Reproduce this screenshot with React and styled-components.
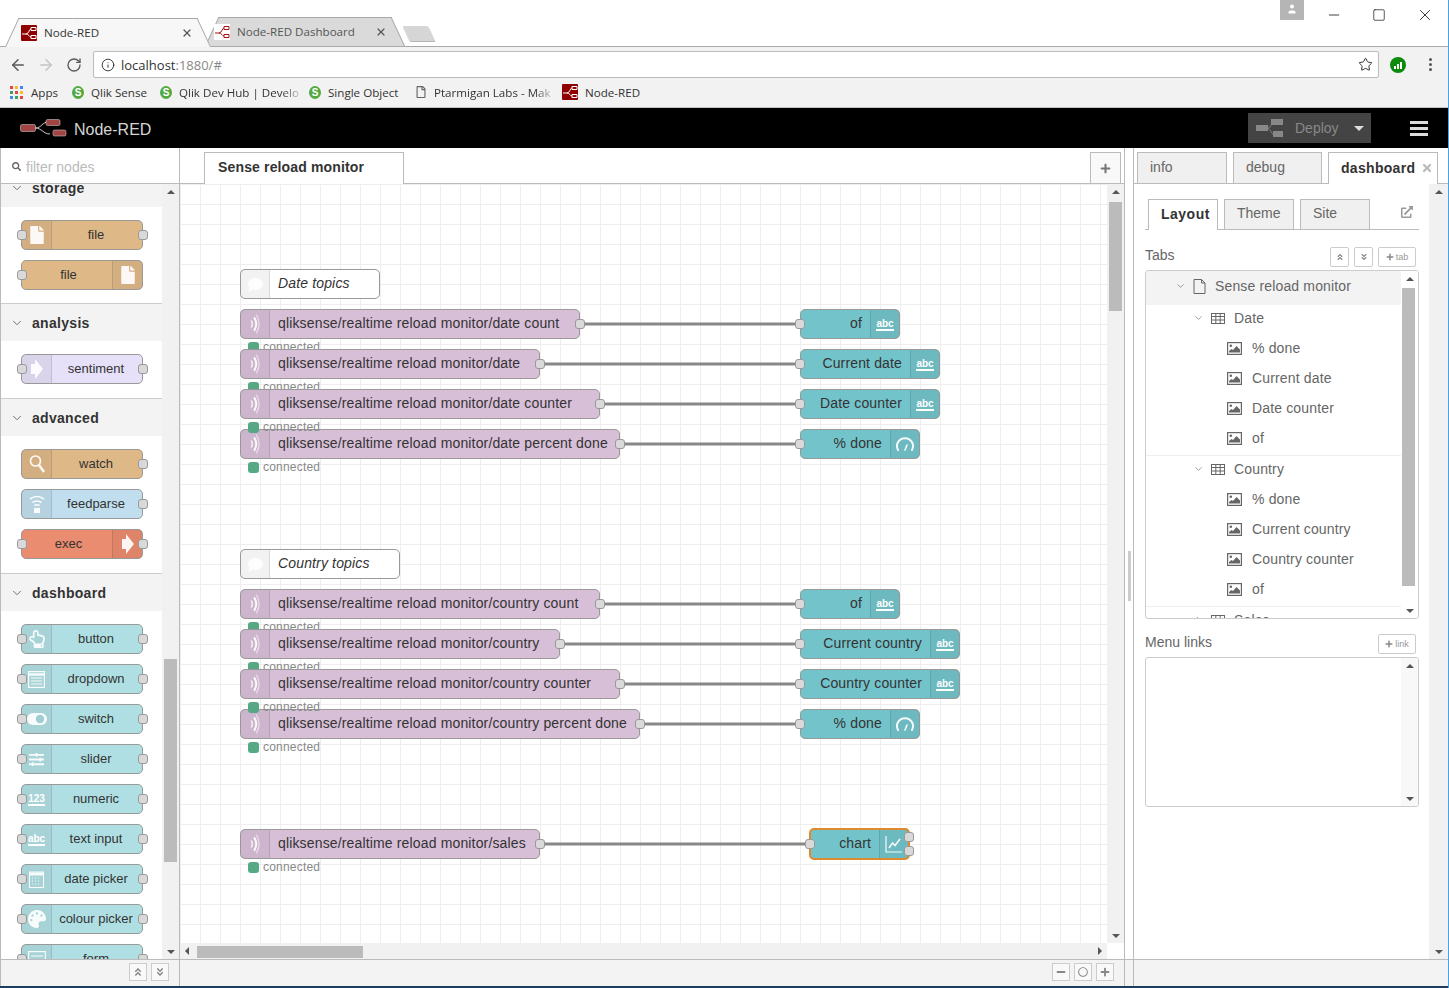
import React from "react";
import styled, { createGlobalStyle } from "styled-components";
import { ArrowLeft, ArrowRight, RotateCw, Info, Star, X, Minus, Square, User, ChevronDown, ChevronRight } from "lucide-react";
import {
	FaAngleDoubleUp,
	FaAngleDoubleDown,
	FaPlus,
	FaMinus,
	FaTimes,
	FaSearch,
	FaRegFile,
	FaFile,
	FaExternalLinkAlt,
	FaRegCircle,
	FaRegHandPointUp,
	FaSlidersH,
	FaPalette,
	FaComment,
} from "react-icons/fa";

const GlobalStyle = createGlobalStyle`
	html, body { margin: 0; padding: 0; background: #fff; }
	* { box-sizing: border-box; }
	body { font-family: "Liberation Sans", Arial, sans-serif; }
`;

const Page = styled.div`
	width: 1449px;
	height: 988px;
	overflow: hidden;
	display: flex;
	flex-direction: column;
	border-right: 1px solid #4aa3df;
`;

/* browser chrome */
const TabStrip = styled.div`
	height: 47px;
	flex: none;
	display: flex;
	align-items: flex-end;
	padding-left: 5px;
	background: #fff;
	border-bottom: 1px solid #a8a8a8;
	position: relative;
`;

const BrowserTab = styled.div`
	position: relative;
	width: ${p => p.$w}px;
	height: 29px;
	margin-bottom: ${p => (p.$active ? "-1px" : "0")};
	margin-right: -6px;
	display: flex;
	align-items: center;
	padding: 0 0 0 ${p => p.$pad}px;
	font-family: "Open Sans", sans-serif;
	font-size: 11.6px;
	color: ${p => (p.$active ? "#333" : "#555")};
	z-index: ${p => (p.$active ? 2 : 1)};
	&::before,
	&::after {
		content: "";
		position: absolute;
		top: 0;
		bottom: 0;
		width: 60%;
		background: ${p => (p.$active ? "#f7f7f7" : "#dadada")};
		border-top: 1px solid #a8a8a8;
		transform-origin: bottom;
	}
	&::before {
		left: 0;
		border-left: 1px solid #a8a8a8;
		transform: skewX(-25deg);
	}
	&::after {
		right: 0;
		border-right: 1px solid #a8a8a8;
		transform: skewX(25deg);
	}
`;

const TabLabel = styled.span`
	position: relative;
	z-index: 1;
	flex: 1;
	margin-left: 7px;
	white-space: nowrap;
`;

const TabClose = styled.span`
	position: relative;
	z-index: 1;
	display: flex;
	margin-right: 18px;
	color: #555;
`;

const TabIconSlot = styled.span`
	position: relative;
	z-index: 1;
	display: flex;
`;

const NewTab = styled.div`
	width: 26px;
	height: 16px;
	margin: 0 0 4px 7px;
	background: #d6d6d6;
	border-bottom: 1px solid #b5b5b5;
	border-radius: 2px;
	transform: skewX(25deg);
`;

const ProfileBadge = styled.div`
	position: absolute;
	top: 0;
	left: 1280px;
	width: 24px;
	height: 20px;
	background: #b5b5b5;
	color: #fff;
	display: flex;
	justify-content: center;
	padding-top: 3px;
`;

const WindowControls = styled.div`
	position: absolute;
	top: 6px;
	right: 14px;
	display: flex;
	align-items: center;
	gap: 30px;
	color: #111;
`;

const Toolbar = styled.div`
	height: 33px;
	flex: none;
	background: #f2f2f2;
	display: flex;
	align-items: center;
	padding: 2px 10px 0 8px;
	color: #5a5a5a;
`;

const NavIcon = styled.span`
	display: flex;
	width: 20px;
	justify-content: center;
	margin-right: 8px;
	color: ${p => (p.$off ? "#c4c4c4" : "#5a5a5a")};
`;

const Omnibox = styled.div`
	width: 1286px;
	height: 27px;
	margin-left: 1px;
	background: #fff;
	border: 1px solid #bbb;
	border-radius: 2px;
	display: flex;
	align-items: center;
	padding: 0 5px 0 7px;
	font-family: "Open Sans", sans-serif;
	font-size: 13px;
	color: #333;
`;

const OmniText = styled.span`
	flex: 1;
	margin-left: 6px;
`;

const OmniDim = styled.span`
	color: #888;
`;

const Extension = styled.span`
	width: 16px;
	height: 16px;
	margin-left: 11px;
	border-radius: 50%;
	background: #0c8a0c;
	display: flex;
	align-items: flex-end;
	justify-content: center;
	gap: 1px;
	padding-bottom: 4px;
`;

const ExtBar = styled.i`
	display: block;
	width: 2px;
	height: ${p => p.$h}px;
	background: #fff;
`;

const MenuDots = styled.span`
	margin-left: 23px;
	display: flex;
	flex-direction: column;
	gap: 2px;
`;

const MenuDot = styled.i`
	display: block;
	width: 3px;
	height: 3px;
	border-radius: 50%;
	background: #555;
`;

const Bookmarks = styled.div`
	height: 28px;
	flex: none;
	background: #f2f2f2;
	border-bottom: 1px solid #c4c4c4;
	display: flex;
	align-items: center;
	padding: 0 0 3px 10px;
	font-family: "Open Sans", sans-serif;
	font-size: 11.6px;
	color: #333;
`;

const Bookmark = styled.div`
	width: ${p => p.$w}px;
	flex: none;
	display: flex;
	align-items: center;
	gap: 7px;
	white-space: nowrap;
`;

const BookmarkText = styled.span`
	display: block;
	mask-image: linear-gradient(to right, #000 86%, rgba(0, 0, 0, 0.25));
`;

const AppsGrid = styled.span`
	display: grid;
	grid-template-columns: repeat(3, 3px);
	gap: 2px;
	flex: none;
	margin-right: 1px;
`;

const AppsDot = styled.i`
	display: block;
	width: 3px;
	height: 3px;
	background: ${p => p.$c};
`;

const QlikBadge = styled.span`
	width: 12px;
	height: 13px;
	flex: none;
	border-radius: 50%;
	background: #54a944;
	color: #fff;
	font-size: 10px;
	font-weight: bold;
	font-family: "Liberation Sans", sans-serif;
	text-align: center;
	line-height: 13px;
`;

/* node-red header */
const Header = styled.header`
	height: 40px;
	flex: none;
	background: #000;
	display: flex;
	align-items: center;
	padding: 0 20px 0 20px;
`;

const Brand = styled.span`
	flex: 1;
	margin-left: 7px;
	padding-top: 3px;
	color: #d4d4d4;
	font-size: 16px;
`;

const DeployButton = styled.div`
	width: 123px;
	height: 30px;
	background: #444;
	color: #888;
	display: flex;
	align-items: center;
	padding-left: 8px;
	font-size: 14px;
	margin-right: 39px;
`;

const DeployLabel = styled.span`
	flex: 1;
	margin-left: 12px;
`;

const Caret = styled.i`
	display: block;
	width: 0;
	height: 0;
	margin-right: 7px;
	border-left: 5px solid transparent;
	border-right: 5px solid transparent;
	border-top: 5px solid #ddd;
`;

const Burger = styled.div`
	width: 18px;
	display: flex;
	flex-direction: column;
	gap: 3px;
`;

const BurgerBar = styled.i`
	display: block;
	height: 3px;
	background: #ddd;
`;

/* main area */
const Main = styled.div`
	flex: 1;
	min-height: 0;
	display: flex;
`;

const BottomLine = styled.div`
	height: 2px;
	flex: none;
	background: #1e3c60;
`;

const Footer = styled.div`
	height: 27px;
	flex: none;
	background: #f3f3f3;
	border-top: 1px solid #bbb;
	display: flex;
	align-items: center;
	justify-content: flex-end;
	gap: 4px;
	padding: 0 ${p => p.$right || 0}px 2px 0;
`;

const FootButton = styled.span`
	width: 18px;
	height: 18px;
	background: #f9f9f9;
	border: 1px solid #ccc;
	color: #888;
	display: flex;
	align-items: center;
	justify-content: center;
	font-size: 10px;
`;

const Sidebar = styled.aside`
	width: 180px;
	flex: none;
	display: flex;
	flex-direction: column;
	border-left: 1px solid #bbb;
	border-right: 1px solid #bbb;
`;

const Filter = styled.div`
	height: 36px;
	flex: none;
	border-bottom: 1px solid #bbb;
	display: flex;
	align-items: center;
	gap: 5px;
	padding: 2px 0 0 11px;
	color: #bbb;
	font-size: 14px;
`;

const SearchGlyph = styled.span`
	display: flex;
	color: #666;
	font-size: 9px;
`;

const PaletteBody = styled.div`
	flex: 1;
	min-height: 0;
	display: flex;
	overflow: hidden;
`;

const PaletteList = styled.div`
	width: 161px;
	flex: none;
	margin-top: -15px;
`;

const SectionHead = styled.div`
	height: 38px;
	background: #f3f3f3;
	display: flex;
	align-items: center;
	gap: 8px;
	padding-left: 9px;
	font-size: 14px;
	font-weight: bold;
	letter-spacing: 0.3px;
	color: #333;
	border-top: ${p => (p.$first ? "none" : "1px solid #ccc")};
	svg {
		color: #666;
	}
`;

const SectionBody = styled.div`
	padding: 13px 0 ${p => (p.$first ? 3 : 4)}px 20px;
`;

const PaletteNode = styled.div`
	position: relative;
	width: 122px;
	height: 30px;
	margin-bottom: 10px;
	background: ${p => p.$color};
	border: 1px solid #999;
	border-radius: 5px;
	display: flex;
	flex-direction: ${p => (p.$right ? "row-reverse" : "row")};
	font-size: 13px;
	color: #333;
`;

const NodeStrip = styled.div`
	width: ${p => p.$w || 30}px;
	flex: none;
	background: rgba(0, 0, 0, 0.05);
	border-${p => (p.$right ? "left" : "right")}: 1px solid rgba(0, 0, 0, 0.1);
	display: flex;
	align-items: center;
	justify-content: center;
	color: #fff;
	font-size: 18px;
	svg {
		opacity: 0.92;
	}
`;

const PaletteLabel = styled.div`
	flex: 1;
	text-align: center;
	line-height: 28px;
	padding: ${p => (p.$right ? "0 0 0 3px" : "0 2px 0 0")};
	white-space: nowrap;
`;

const Port = styled.span`
	position: absolute;
	top: ${p => (p.$top !== undefined ? `${p.$top}px` : "50%")};
	${p => (p.$side === "left" ? `left: ${p.$flow ? -6 : -5}px;` : "right: -6px;")}
	width: 10px;
	height: 10px;
	margin-top: ${p => (p.$top !== undefined ? "0" : "-5px")};
	background: #d9d9d9;
	border: 1px solid #999;
	border-radius: 3px;
`;

const Track = styled.div`
	position: relative;
	flex: none;
	width: ${p => p.$w || 17}px;
	background: ${p => p.$bg || "#f1f1f1"};
`;

const Thumb = styled.div`
	position: absolute;
	left: ${p => p.$left || 2}px;
	right: ${p => p.$rightGap || 2}px;
	top: ${p => p.$top}px;
	height: ${p => p.$h}px;
	background: #bbb;
`;

const Arrow = styled.i`
	position: absolute;
	left: 50%;
	margin-left: -4px;
	width: 0;
	height: 0;
	border-left: 4px solid transparent;
	border-right: 4px solid transparent;
	${p => (p.$up ? `top: ${p.$off}px; border-bottom: 4px solid #555;` : `bottom: ${p.$off}px; border-top: 4px solid #555;`)}
`;

const SideArrow = styled.i`
	position: absolute;
	top: 50%;
	margin-top: -4px;
	width: 0;
	height: 0;
	border-top: 4px solid transparent;
	border-bottom: 4px solid transparent;
	${p => (p.$left ? `left: 5px; border-right: 4px solid #555;` : `right: 5px; border-left: 4px solid #555;`)}
`;

/* workspace */
const Workspace = styled.section`
	width: 945px;
	flex: none;
	display: flex;
	flex-direction: column;
	border-right: 1px solid #bbb;
`;

const WorkTabs = styled.div`
	height: 36px;
	flex: none;
	border-bottom: 1px solid #bbb;
	display: flex;
	align-items: flex-end;
	justify-content: space-between;
	padding: 0 3px 0 24px;
`;

const WorkTab = styled.div`
	width: 200px;
	height: 32px;
	margin-bottom: -1px;
	background: #fff;
	border: 1px solid #bbb;
	border-bottom: none;
	padding: 0 0 3px 13px;
	display: flex;
	align-items: center;
	font-size: 14px;
	font-weight: bold;
	letter-spacing: 0.15px;
	color: #333;
`;

const AddTab = styled.div`
	width: 31px;
	height: 31px;
	border: 1px solid #bbb;
	border-bottom: none;
	color: #777;
	background: #f9f9f9;
	display: flex;
	align-items: center;
	justify-content: center;
	font-size: 11px;
`;

const CanvasRow = styled.div`
	flex: 1;
	min-height: 0;
	display: flex;
`;

const Canvas = styled.div`
	position: relative;
	flex: 1;
	overflow: hidden;
	background-color: #fff;
	background-image: linear-gradient(#eee 1px, transparent 1px), linear-gradient(90deg, #eee 1px, transparent 1px);
	background-size: 20px 20px;
`;

const Wires = styled.svg`
	position: absolute;
	left: 0;
	top: 0;
`;

const FlowNode = styled.div`
	position: absolute;
	left: ${p => p.$x - (p.$selected ? 1 : 0)}px;
	top: ${p => p.$y - (p.$selected ? 1 : 0)}px;
	width: ${p => p.$w + (p.$selected ? 1 : 0)}px;
	height: ${p => (p.$selected ? 32 : 30)}px;
	background: ${p => p.$color};
	border: ${p => (p.$selected ? "2px solid #e08a2f" : "1px solid #999")};
	border-radius: 5px;
	display: flex;
	flex-direction: ${p => (p.$right ? "row-reverse" : "row")};
	font-size: 14px;
	font-style: ${p => (p.$italic ? "italic" : "normal")};
	color: #333;
	letter-spacing: 0.15px;
`;

const FlowLabel = styled.div`
	flex: 1;
	line-height: 27px;
	padding: 0 8px;
	white-space: nowrap;
	text-align: ${p => (p.$right ? "right" : "left")};
`;

const MiniText = styled.span`
	font-size: 10px;
	font-weight: bold;
	font-style: normal;
	letter-spacing: 0;
	color: #fff;
	line-height: 11px;
	border-bottom: 2px solid #fff;
`;

const Status = styled.div`
	position: absolute;
	left: ${p => p.$x}px;
	top: ${p => p.$y}px;
	display: flex;
	align-items: center;
	gap: 4px;
	font-size: 12px;
	letter-spacing: 0.2px;
	color: #888;
	white-space: nowrap;
`;

const StatusDot = styled.i`
	display: block;
	width: 11px;
	height: 11px;
	border-radius: 3px;
	background: #55a985;
`;

const HScroll = styled.div`
	height: 16px;
	flex: none;
	display: flex;
`;

const HTrack = styled.div`
	position: relative;
	flex: 1;
	background: #f1f1f1;
`;

const HThumb = styled.div`
	position: absolute;
	left: 17px;
	top: 3px;
	width: 166px;
	height: 12px;
	background: #bbb;
`;

const HCorner = styled.div`
	width: 17px;
	background: #fff;
`;

const Splitter = styled.div`
	width: 8px;
	flex: none;
	display: flex;
	flex-direction: column;
`;

const SplitBody = styled.div`
	flex: 1;
	display: flex;
	align-items: center;
	padding-left: 3px;
`;

const SplitHandle = styled.i`
	display: block;
	width: 3px;
	height: 50px;
	margin-top: 44px;
	background: #ccc;
`;

/* info panel */
const Panel = styled.aside`
	flex: 1;
	min-width: 0;
	display: flex;
	flex-direction: column;
	border-left: 1px solid #bbb;
`;

const PanelTabs = styled.div`
	height: 36px;
	flex: none;
	border-bottom: 1px solid #bbb;
	display: flex;
	align-items: flex-end;
	gap: 6px;
	padding-left: 3px;
`;

const PanelTab = styled.div`
	width: ${p => p.$w}px;
	height: 32px;
	margin-bottom: -1px;
	border: 1px solid #bbb;
	${p => (p.$active ? "border-bottom: none;" : "")}
	background: ${p => (p.$active ? "#fff" : "#f0f0f0")};
	color: ${p => (p.$active ? "#333" : "#666")};
	font-weight: ${p => (p.$active ? "bold" : "normal")};
	letter-spacing: ${p => (p.$active ? "0.3px" : "0")};
	font-size: 14px;
	display: flex;
	align-items: center;
	justify-content: space-between;
	padding: 0 4px 2px 12px;
`;

const PanelClose = styled.span`
	display: flex;
	color: #bbb;
	font-size: 12px;
`;

const PanelBody = styled.div`
	flex: 1;
	min-height: 0;
	display: flex;
`;

const PanelContent = styled.div`
	flex: 1;
	min-width: 0;
	padding: 14px 10px 0 11px;
	color: #666;
	font-size: 14px;
`;

const SubTabs = styled.div`
	height: 32px;
	border-bottom: 1px solid #bbb;
	display: flex;
	align-items: flex-end;
	gap: 6px;
	padding-left: 3px;
`;

const SubTab = styled.div`
	width: 70px;
	height: 31px;
	margin-bottom: -1px;
	border: 1px solid #bbb;
	${p => (p.$active ? "border-bottom: none;" : "")}
	background: ${p => (p.$active ? "#fff" : "#f0f0f0")};
	color: ${p => (p.$active ? "#333" : "#666")};
	font-weight: ${p => (p.$active ? "bold" : "normal")};
	letter-spacing: ${p => (p.$active ? "0.5px" : "0")};
	display: flex;
	align-items: center;
	padding: 0 0 3px 12px;
`;

const PopOut = styled.span`
	margin-left: auto;
	align-self: center;
	margin-right: 6px;
	display: flex;
	color: #999;
	font-size: 12px;
	padding-bottom: 4px;
`;

const FieldHead = styled.div`
	height: ${p => p.$h}px;
	display: flex;
	align-items: flex-end;
	gap: 5px;
	padding: 0 3px 3px 0;
`;

const FieldTitle = styled.span`
	flex: 1;
	align-self: center;
	padding-top: ${p => p.$pt || 0}px;
`;

const MiniButton = styled.span`
	height: 20px;
	width: ${p => p.$w || 19}px;
	background: #fff;
	border: 1px solid #ccc;
	border-radius: 2px;
	color: #999;
	font-size: 9px;
	display: flex;
	align-items: center;
	justify-content: center;
	gap: 2px;
	svg:first-child {
		font-size: 8px;
		color: #888;
	}
`;

const BoxShell = styled.div`
	display: flex;
	width: 274px;
	height: ${p => p.$h}px;
	border: 1px solid #ccc;
	border-radius: 3px;
	overflow: hidden;
	background: #fff;
`;

const Tree = styled.div`
	flex: 1;
	min-width: 0;
	letter-spacing: 0.15px;
`;

const TreeRoot = styled.div`
	height: 34px;
	margin-right: -17px;
	background: #f3f3f3;
	display: flex;
	align-items: center;
	padding: 0 0 4px 29px;
`;

const TreeGroup = styled.div`
	border-bottom: 1px solid #eee;
	padding-bottom: 2px;
`;

const TreeHead = styled.div`
	height: 28px;
	display: flex;
	align-items: center;
	padding: 0 0 2px 47px;
`;

const TreeItem = styled.div`
	height: 30px;
	display: flex;
	align-items: center;
	padding-left: 81px;
	gap: 10px;
`;

const Chevron = styled.span`
	display: flex;
	width: 11px;
	justify-content: center;
	color: #777;
`;

const TreeGlyph = styled.span`
	display: flex;
	margin: 0 ${p => p.$gap}px 0 ${p => p.$lead}px;
	color: #666;
`;

const Wave = () => (
	<svg width="16" height="22" viewBox="0 0 16 22" fill="none" stroke="#fff" strokeLinecap="round">
		<path d="M4.5 8q1.8 3 0 6" strokeWidth="1.6" opacity=".8" />
		<path d="M7.5 5q3.5 6 0 12" strokeWidth="2" />
		<path d="M9.5 2q5.2 9 0 18" strokeWidth="1.2" opacity=".65" />
	</svg>
);

const ArrowGlyph = () => (
	<svg width="13" height="20" viewBox="0 0 13 20" fill="#fff">
		<path d="M1 5h4V0l8 10-8 10v-5H1z" />
	</svg>
);

const FeedGlyph = () => (
	<svg width="16" height="20" viewBox="0 0 16 20" fill="none" stroke="#fff" strokeWidth="1.6">
		<path d="M1 5q7-5 14 0" />
		<path d="M3.5 8.5q4.5-3 9 0" />
		<path d="M5.5 11.5q2.5-1.5 5 0" />
		<rect x="5" y="14" width="6" height="5" fill="#fff" stroke="none" />
	</svg>
);

const SearchIcon = () => (
	<svg width="16" height="20" viewBox="0 0 16 20" fill="none" stroke="#fff" strokeWidth="1.7">
		<circle cx="6.5" cy="7" r="5" />
		<path d="M10 11l5 7" strokeWidth="2.4" />
	</svg>
);

const DropdownGlyph = () => (
	<svg width="17" height="17" viewBox="0 0 17 17" fill="none" stroke="#fff" strokeWidth="1.2">
		<rect x=".6" y=".6" width="15.8" height="15.8" />
		<path d="M.6 3.5h15.8" strokeWidth="2.4" />
		<path d="M3 7h11M3 10h11M3 13h11" />
	</svg>
);

const SwitchGlyph = () => (
	<svg width="20" height="12" viewBox="0 0 20 12">
		<rect width="20" height="12" rx="6" fill="#fff" />
		<circle cx="13" cy="6" r="4.2" fill="#9fcdd1" />
	</svg>
);

const CalendarGlyph = () => (
	<svg width="15" height="18" viewBox="0 0 15 18" fill="none" stroke="#fff">
		<rect x=".5" y="2" width="14" height="15.500" strokeWidth="1" />
		<path d="M.5 4h14" strokeWidth="3" />
		<path d="M3 8h9M3 11h9M3 14h9" strokeWidth="1" strokeDasharray="1 2" />
	</svg>
);

const FormGlyph = () => (
	<svg width="18" height="17" viewBox="0 0 18 17" fill="none" stroke="#fff" strokeWidth="1.2">
		<rect x=".6" y=".6" width="16.8" height="15.8" />
		<path d="M3 5h12M3 9h12M3 13h12" />
	</svg>
);

const Gauge = () => (
	<svg width="20" height="18" viewBox="0 0 20 18" fill="none" stroke="#fff" strokeLinecap="round">
		<path d="M3 15A8 8 0 1 1 17 15" strokeWidth="2" />
		<path d="M10 15l2-5" strokeWidth="1.6" />
	</svg>
);

const ChartGlyph = () => (
	<svg width="18" height="18" viewBox="0 0 18 18" fill="none" stroke="#fff" strokeWidth="1.2">
		<path d="M1 1v16h16" />
		<path d="M4 13l3.5-5 2.5 2.5L15 4" strokeWidth="1.6" />
	</svg>
);

const Logo = () => (
	<svg width="47" height="18" viewBox="0 0 47 18">
		<path d="M15 9c7 0 7-6 13-6M15 9c7 0 8 6 15 6" fill="none" stroke="#ccc" strokeWidth="1" />
		<rect x=".5" y="5.5" width="15" height="7" rx="1.5" fill="#a04444" stroke="#ddd" strokeWidth=".5" />
		<rect x="26" y=".5" width="14" height="6" rx="1.5" fill="#a04444" stroke="#ddd" strokeWidth=".5" />
		<rect x="33" y="11" width="13" height="6" rx="1.5" fill="#a04444" stroke="#ddd" strokeWidth=".5" />
	</svg>
);

const DeployGlyph = () => (
	<svg width="27" height="18" viewBox="0 0 27 18">
		<path d="M11 9.5c4 0 4-6 7-6M11 9.5c4 0 4 6 7 6" fill="none" stroke="#888" strokeWidth="1" />
		<rect y="6" width="12" height="6" fill="#888" />
		<rect x="15" width="12" height="6" fill="#888" />
		<rect x="17" y="12" width="10" height="6" fill="#888" />
	</svg>
);

const Favicon = ({ light }) => (
	<svg width="16" height="16" viewBox="0 0 16 16">
		<rect width="16" height="16" rx="1" fill={light ? "#fff" : "#8f0000"} />
		<g fill="none" stroke={light ? "#a11" : "#fff"} strokeWidth="1">
			<path d="M1 9h4c3 0 3-5 5-5M5 9c3 0 3 3 5 3" />
			<path d="M10 2.5h5v3h-5zM10 10.5h5v3h-5z" />
		</g>
	</svg>
);

const DocGlyph = () => (
	<svg width="13" height="15" viewBox="0 0 13 15" fill="none" stroke="#666" strokeWidth="1">
		<path d="M1 .5h7.5L12 4v10.500H1z" />
		<path d="M8.500.5V4H12" />
	</svg>
);

const TableGlyph = () => (
	<svg width="14" height="11" viewBox="0 0 14 11" fill="none" stroke="#666" strokeWidth="1">
		<rect x=".5" y=".5" width="13" height="10" />
		<path d="M.5 3.500h13M.5 7h13M4.800.5v10M9.200.5v10" />
	</svg>
);

const PictureGlyph = () => (
	<svg width="15" height="13" viewBox="0 0 15 13">
		<rect x=".6" y=".6" width="13.8" height="11.800" fill="#fff" stroke="#666" strokeWidth="1.200" />
		<circle cx="3.800" cy="3.800" r="1.300" fill="#666" />
		<path d="M2 10.500V9l2.500-2 1.500 1 3.500-4 3.500 3.500v3z" fill="#666" />
	</svg>
);

const MiniAbc = () => <MiniText>abc</MiniText>;

const icons = {
	file: <FaFile />,
	arrow: <ArrowGlyph />,
	search: <SearchIcon />,
	feed: <FeedGlyph />,
	hand: <FaRegHandPointUp />,
	dropdown: <DropdownGlyph />,
	switch: <SwitchGlyph />,
	slider: <FaSlidersH size={15} />,
	num: <MiniText>123</MiniText>,
	abc: <MiniAbc />,
	calendar: <CalendarGlyph />,
	palette: <FaPalette />,
	form: <FormGlyph />,
};

const TEAL = "#b0dfe3";
const palette = [
	{
		title: "storage",
		first: true,
		nodes: [
			{ label: "file", color: "#deb887", icon: "file", out: true, in: true },
			{ label: "file", color: "#deb887", icon: "file", in: true, right: true },
		],
	},
	{ title: "analysis", nodes: [{ label: "sentiment", color: "#e6e0f8", icon: "arrow", in: true, out: true }] },
	{
		title: "advanced",
		nodes: [
			{ label: "watch", color: "#deb887", icon: "search", out: true },
			{ label: "feedparse", color: "#c0deed", icon: "feed", out: true },
			{ label: "exec", color: "#e98c6f", icon: "arrow", in: true, out: true, right: true },
		],
	},
	{
		title: "dashboard",
		nodes: [
			{ label: "button", icon: "hand", in: true, out: true },
			{ label: "dropdown", icon: "dropdown", in: true, out: true },
			{ label: "switch", icon: "switch", in: true, out: true },
			{ label: "slider", icon: "slider", in: true, out: true },
			{ label: "numeric", icon: "num", in: true, out: true },
			{ label: "text input", icon: "abc", in: true, out: true },
			{ label: "date picker", icon: "calendar", in: true, out: true },
			{ label: "colour picker", icon: "palette", in: true, out: true },
			{ label: "form", icon: "form", in: true, out: true },
		].map(n => ({ ...n, color: TEAL })),
	},
];

// canvas coordinates, origin is the top left of the grid. the counter row goes last so its status sits on top
const flows = [
	{ y: 125, w: 340, topic: "date count", out: "of", outW: 100, icon: "abc" },
	{ y: 165, w: 300, topic: "date", out: "Current date", outW: 140, icon: "abc" },
	{ y: 245, w: 380, topic: "date percent done", out: "% done", outW: 120, icon: "gauge" },
	{ y: 205, w: 360, topic: "date counter", out: "Date counter", outW: 140, icon: "abc" },
	{ y: 405, w: 360, topic: "country count", out: "of", outW: 100, icon: "abc" },
	{ y: 445, w: 320, topic: "country", out: "Current country", outW: 160, icon: "abc" },
	{ y: 525, w: 400, topic: "country percent done", out: "% done", outW: 120, icon: "gauge" },
	{ y: 485, w: 380, topic: "country counter", out: "Country counter", outW: 160, icon: "abc" },
	{ y: 645, w: 300, topic: "sales", out: "chart", outW: 100, icon: "chart", outX: 630 },
];

const comments = [
	{ y: 85, w: 140, label: "Date topics" },
	{ y: 365, w: 160, label: "Country topics" },
];

const NODE_X = 60;
const OUT_X = 620;
const PURPLE = "#d8bfd8";
const OUT_TEAL = "#73c3cb";

const Arrows = () => (
	<>
		<Arrow $up $off={6} />
		<Arrow $off={5} />
	</>
);

const treeGroups = [
	{ name: "Date", items: ["% done", "Current date", "Date counter", "of"] },
	{ name: "Country", items: ["% done", "Current country", "Country counter", "of"] },
];

const appsColors = ["#e8453c", "#f9bb2d", "#4285f4", "#3ba55c", "#e8453c", "#f9bb2d", "#4285f4", "#3ba55c", "#e8453c"];

export default function App() {
	return (
		<Page>
			<GlobalStyle />
			<TabStrip>
				<BrowserTab $active $w={206} $pad={16}>
					<TabIconSlot><Favicon /></TabIconSlot>
					<TabLabel>Node-RED</TabLabel>
					<TabClose><X size={12} strokeWidth={2.4} /></TabClose>
				</BrowserTab>
				<BrowserTab $w={200} $pad={9}>
					<TabIconSlot><Favicon light /></TabIconSlot>
					<TabLabel>Node-RED Dashboard</TabLabel>
					<TabClose><X size={12} strokeWidth={2.4} /></TabClose>
				</BrowserTab>
				<NewTab />
				<ProfileBadge><User size={12} fill="#fff" strokeWidth={0} /></ProfileBadge>
				<WindowControls>
					<Minus size={16} strokeWidth={1.2} />
					<Square size={14} strokeWidth={1.2} />
					<X size={18} strokeWidth={1.1} />
				</WindowControls>
			</TabStrip>
			<Toolbar>
				<NavIcon><ArrowLeft size={18} strokeWidth={2} /></NavIcon>
				<NavIcon $off><ArrowRight size={18} strokeWidth={2} /></NavIcon>
				<NavIcon><RotateCw size={16} strokeWidth={2} /></NavIcon>
				<Omnibox>
					<Info size={14} strokeWidth={1.6} />
					<OmniText>localhost<OmniDim>:1880/#</OmniDim></OmniText>
					<Star size={15} strokeWidth={1.6} />
				</Omnibox>
				<Extension>
					<ExtBar $h={3} />
					<ExtBar $h={5} />
					<ExtBar $h={7} />
				</Extension>
				<MenuDots>
					<MenuDot />
					<MenuDot />
					<MenuDot />
				</MenuDots>
			</Toolbar>
			<Bookmarks>
				<Bookmark $w={62}>
					<AppsGrid>
						{appsColors.map((c, i) => <AppsDot key={i} $c={c} />)}
					</AppsGrid>
					Apps
				</Bookmark>
				<Bookmark $w={88}><QlikBadge>S</QlikBadge>Qlik Sense</Bookmark>
				<Bookmark $w={149}>
					<QlikBadge>S</QlikBadge>
					<BookmarkText>Qlik Dev Hub | Develo</BookmarkText>
				</Bookmark>
				<Bookmark $w={106}><QlikBadge>S</QlikBadge>Single Object</Bookmark>
				<Bookmark $w={147}>
					<FaRegFile size={12} color="#666" />
					<BookmarkText>Ptarmigan Labs - Mak</BookmarkText>
				</Bookmark>
				<Bookmark $w={100}><Favicon />Node-RED</Bookmark>
			</Bookmarks>
			<Header>
				<Logo />
				<Brand>Node-RED</Brand>
				<DeployButton>
					<DeployGlyph />
					<DeployLabel>Deploy</DeployLabel>
					<Caret />
				</DeployButton>
				<Burger>
					<BurgerBar />
					<BurgerBar />
					<BurgerBar />
				</Burger>
			</Header>
			<Main>
				<Sidebar>
					<Filter>
						<SearchGlyph><FaSearch /></SearchGlyph>
						filter nodes
					</Filter>
					<PaletteBody>
						<PaletteList>
							{palette.map(section => (
								<div key={section.title}>
									<SectionHead $first={section.first}>
										<ChevronDown size={14} strokeWidth={1.6} />
										{section.title}
									</SectionHead>
									<SectionBody $first={section.first}>
										{section.nodes.map((n, i) => (
											<PaletteNode key={i} $color={n.color} $right={n.right}>
												{n.in && <Port $side="left" />}
												<NodeStrip $right={n.right}>{icons[n.icon]}</NodeStrip>
												<PaletteLabel $right={n.right}>{n.label}</PaletteLabel>
												{n.out && <Port $side="right" />}
											</PaletteNode>
										))}
									</SectionBody>
								</div>
							))}
						</PaletteList>
						<Track>
							<Arrows />
							<Thumb $top={475} $h={203} />
						</Track>
					</PaletteBody>
					<Footer $right={10}>
						<FootButton><FaAngleDoubleUp /></FootButton>
						<FootButton><FaAngleDoubleDown /></FootButton>
					</Footer>
				</Sidebar>
				<Workspace>
					<WorkTabs>
						<WorkTab>Sense reload monitor</WorkTab>
						<AddTab><FaPlus /></AddTab>
					</WorkTabs>
					<CanvasRow>
						<Canvas>
							<Wires width="929" height="759">
								{flows.map(f => (
									<path
										key={f.topic}
										d={`M${NODE_X + f.w} ${f.y + 15}H${f.outX || OUT_X}`}
										stroke="#888"
										strokeWidth="3"
										fill="none"
									/>
								))}
							</Wires>
							{comments.map(c => (
								<FlowNode key={c.label} $x={NODE_X} $y={c.y} $w={c.w} $color="#fff" $italic>
									<NodeStrip $w={29}>
										<FaComment size={15} />
									</NodeStrip>
									<FlowLabel>{c.label}</FlowLabel>
								</FlowNode>
							))}
							{flows.map(f => (
								<React.Fragment key={f.topic}>
									<Status $x={NODE_X + 8} $y={f.y + 31}>
										<StatusDot />
										connected
									</Status>
									<FlowNode $x={NODE_X} $y={f.y} $w={f.w} $color={PURPLE}>
										<NodeStrip $w={29}><Wave /></NodeStrip>
										<FlowLabel>qliksense/realtime reload monitor/{f.topic}</FlowLabel>
										<Port $side="right" />
									</FlowNode>
									<FlowNode
										$x={f.outX || OUT_X}
										$y={f.y}
										$w={f.outW}
										$color={OUT_TEAL}
										$right
										$selected={f.icon === "chart"}
									>
										<Port $side="left" $flow />
										<NodeStrip $right $w={29}>
											{f.icon === "abc" && <MiniAbc />}
											{f.icon === "gauge" && <Gauge />}
											{f.icon === "chart" && <ChartGlyph />}
										</NodeStrip>
										<FlowLabel $right>{f.out}</FlowLabel>
										{f.icon === "chart" && <Port $side="right" $top={2} />}
										{f.icon === "chart" && <Port $side="right" $top={16} />}
									</FlowNode>
								</React.Fragment>
							))}
						</Canvas>
						<Track>
							<Arrows />
							<Thumb $top={18} $h={109} />
						</Track>
					</CanvasRow>
					<HScroll>
						<HTrack>
							<SideArrow $left />
							<HThumb />
							<SideArrow />
						</HTrack>
						<HCorner />
					</HScroll>
					<Footer $right={10}>
						<FootButton><FaMinus /></FootButton>
						<FootButton><FaRegCircle /></FootButton>
						<FootButton><FaPlus /></FootButton>
					</Footer>
				</Workspace>
				<Splitter>
					<SplitBody><SplitHandle /></SplitBody>
					<Footer />
				</Splitter>
				<Panel>
					<PanelTabs>
						<PanelTab $w={90}>info</PanelTab>
						<PanelTab $w={89}>debug</PanelTab>
						<PanelTab $w={110} $active>
							dashboard
							<PanelClose><FaTimes /></PanelClose>
						</PanelTab>
					</PanelTabs>
					<PanelBody>
						<PanelContent>
							<SubTabs>
								<SubTab $active>Layout</SubTab>
								<SubTab>Theme</SubTab>
								<SubTab>Site</SubTab>
								<PopOut><FaExternalLinkAlt /></PopOut>
							</SubTabs>
							<FieldHead $h={40}>
								<FieldTitle $pt={12}>Tabs</FieldTitle>
								<MiniButton><FaAngleDoubleUp /></MiniButton>
								<MiniButton><FaAngleDoubleDown /></MiniButton>
								<MiniButton $w={38}><FaPlus />tab</MiniButton>
							</FieldHead>
							<BoxShell $h={349}>
								<Tree>
									<TreeRoot>
										<Chevron><ChevronDown size={14} strokeWidth={1.6} /></Chevron>
										<TreeGlyph $lead={7} $gap={9}><DocGlyph /></TreeGlyph>
										Sense reload monitor
									</TreeRoot>
									{treeGroups.map(g => (
										<TreeGroup key={g.name}>
											<TreeHead>
												<Chevron><ChevronDown size={14} strokeWidth={1.6} /></Chevron>
												<TreeGlyph $lead={7} $gap={9}><TableGlyph /></TreeGlyph>
												{g.name}
											</TreeHead>
											{g.items.map((item, i) => (
												<TreeItem key={i}>
													<TreeGlyph $lead={0} $gap={0}><PictureGlyph /></TreeGlyph>
													{item}
												</TreeItem>
											))}
										</TreeGroup>
									))}
									<TreeHead>
										<Chevron><ChevronRight size={14} strokeWidth={1.6} /></Chevron>
										<TreeGlyph $lead={7} $gap={9}><TableGlyph /></TreeGlyph>
										Sales
									</TreeHead>
								</Tree>
								<Track $bg="#fff">
									<Arrow $up $off={6} />
									<Thumb $top={17} $h={298} $left={1} $rightGap={3} />
									<Arrow $off={5} />
								</Track>
							</BoxShell>
							<FieldHead $h={38}>
								<FieldTitle $pt={11}>Menu links</FieldTitle>
								<MiniButton $w={38}><FaPlus />link</MiniButton>
							</FieldHead>
							<BoxShell $h={150}>
								<Tree />
								<Track $bg="#f8f8f8">
									<Arrow $up $off={6} />
									<Arrow $off={5} />
								</Track>
							</BoxShell>
						</PanelContent>
						<Track $w={19}>
							<Arrows />
						</Track>
					</PanelBody>
					<Footer />
				</Panel>
			</Main>
			<BottomLine />
		</Page>
	);
}
